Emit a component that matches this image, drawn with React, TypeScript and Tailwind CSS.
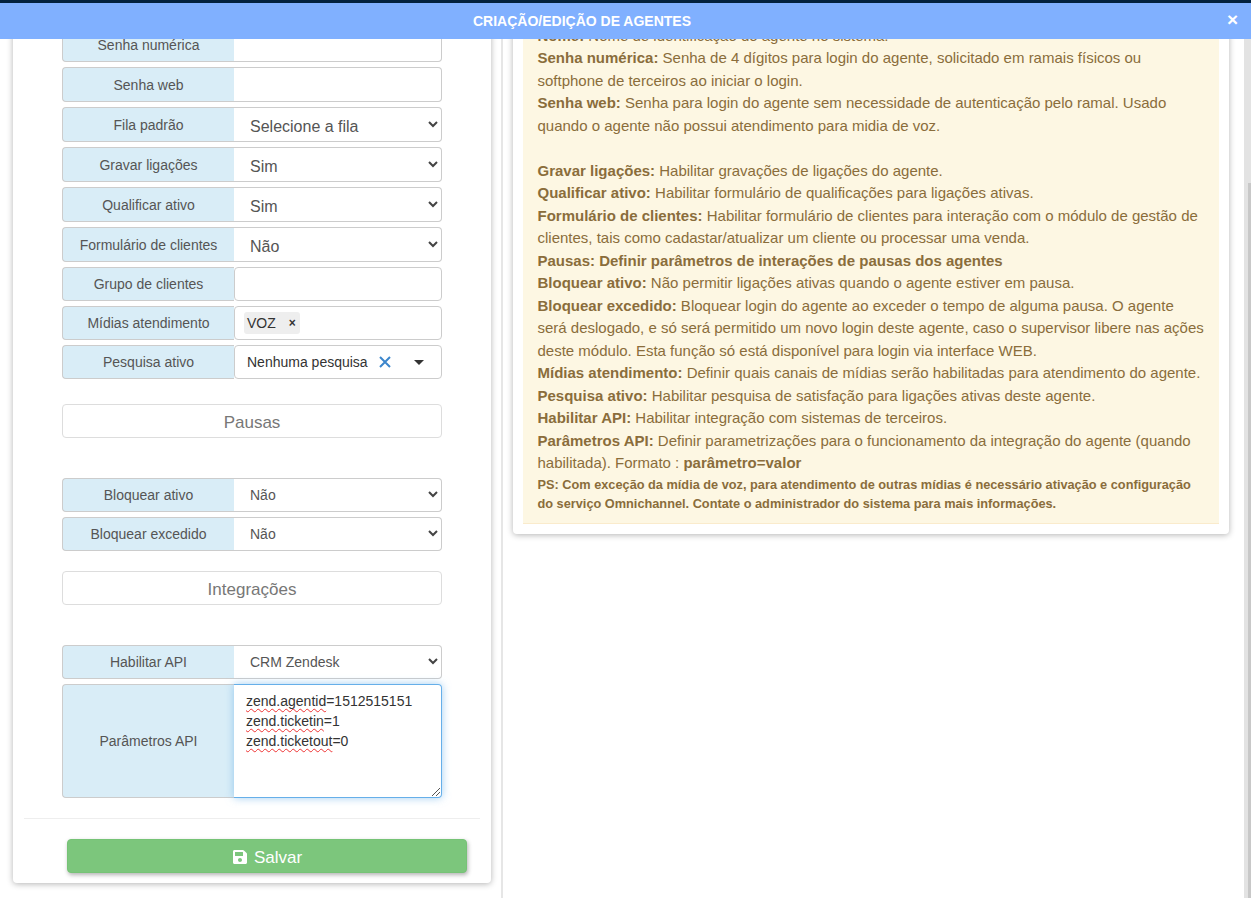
import { FaSave } from "react-icons/fa";

const Row = ({ label, children, className = "h-[35px]", flat = false }: { label: string; children: React.ReactNode; className?: string; flat?: boolean }) => (
  <div className={`flex w-[380px] ${className}`}>
    <div className="flex w-[172px] shrink-0 items-center justify-center rounded-l border border-r-0 border-[#ccc] bg-[#d9edf7] text-sm text-[#555]">
      {label}
    </div>
    <div className={`min-w-0 flex-1 bg-white ${flat ? "" : "rounded border border-[#ccc]"}`}>{children}</div>
  </div>
);

const Chevron = () => (
  <svg width="12" height="8" viewBox="0 0 12 8" className="shrink-0">
    <path d="M2 2l4 4 4-4" fill="none" stroke="#444" strokeWidth="2" />
  </svg>
);

const Blank = () => <div className="h-full rounded-r border border-l-0 border-[#ccc] bg-white" />;

const Select = ({ value, small = false }: { value: string; small?: boolean }) => (
  <div className={`flex h-full items-center justify-between rounded-r border border-l-0 border-[#ccc] bg-white pl-4 pr-[2px] text-[#555] ${small ? "text-sm" : "text-base"}`}>
    <span className={small ? "" : "pt-[4px]"}>{value}</span>
    <span className="pb-[2px]">
      <Chevron />
    </span>
  </div>
);

const Title = ({ text }: { text: string }) => (
  <div className="flex h-[34px] w-[380px] items-center justify-center rounded border border-[#ddd] bg-white pt-[4px] text-[17px] text-[#777]">
    {text}
  </div>
);

const Wavy = ({ children }: { children: React.ReactNode }) => (
  <span className="[text-decoration-color:#e33] [text-decoration-line:underline] [text-decoration-skip-ink:none] [text-decoration-style:wavy] [text-decoration-thickness:1px] [text-underline-offset:2px]">
    {children}
  </span>
);

const help: [string, string][] = [
  ["Senha numérica:", " Senha de 4 dígitos para login do agente, solicitado em ramais físicos ou softphone de terceiros ao iniciar o login."],
  ["Senha web:", " Senha para login do agente sem necessidade de autenticação pelo ramal. Usado quando o agente não possui atendimento para midia de voz."],
];

const help2: [string, string][] = [
  ["Gravar ligações:", " Habilitar gravações de ligações do agente."],
  ["Qualificar ativo:", " Habilitar formulário de qualificações para ligações ativas."],
  ["Formulário de clientes:", " Habilitar formulário de clientes para interação com o módulo de gestão de clientes, tais como cadastar/atualizar um cliente ou processar uma venda."],
  ["Pausas: Definir parâmetros de interações de pausas dos agentes", ""],
  ["Bloquear ativo:", " Não permitir ligações ativas quando o agente estiver em pausa."],
  ["Bloquear excedido:", " Bloquear login do agente ao exceder o tempo de alguma pausa. O agente será deslogado, e só será permitido um novo login deste agente, caso o supervisor libere nas ações deste módulo. Esta função só está disponível para login via interface WEB."],
  ["Mídias atendimento:", " Definir quais canais de mídias serão habilitadas para atendimento do agente."],
  ["Pesquisa ativo:", " Habilitar pesquisa de satisfação para ligações ativas deste agente."],
  ["Habilitar API:", " Habilitar integração com sistemas de terceiros."],
];

export default function App() {
  return (
    <div className="flex h-[898px] flex-col overflow-hidden bg-white font-['Liberation_Sans',sans-serif]">
      <div className="h-[3px] bg-[#02213e]" />
      <header className="relative z-10 flex h-9 items-center justify-center bg-[#80b0ff] pr-[87px] text-sm font-bold text-white">
        CRIAÇÃO/EDIÇÃO DE AGENTES
        <span className="absolute right-[13px] top-[8px] text-[19px] leading-[18px]">×</span>
      </header>

      <div className="relative flex min-h-0 flex-1 overflow-hidden">
        {/* coluna do formulário, rolada para baixo como na tela */}
        <div className="-mt-[12px] ml-[13px] w-[478px] shrink-0 self-start">
          <div className="flex h-[856px] flex-col items-center rounded-b bg-white shadow-[0_1px_6px_rgba(0,0,0,0.3)]">
            <div className="flex flex-col gap-[5px]">
              <Row label="Senha numérica" flat><Blank /></Row>
              <Row label="Senha web" flat><Blank /></Row>
              <Row label="Fila padrão" flat><Select value="Selecione a fila" /></Row>
              <Row label="Gravar ligações" flat><Select value="Sim" /></Row>
              <Row label="Qualificar ativo" flat><Select value="Sim" /></Row>
              <Row label="Formulário de clientes" flat><Select value="Não" /></Row>
              <Row label="Grupo de clientes" className="h-[34px]"><div /></Row>
              <Row label="Mídias atendimento" className="h-[34px]">
                <div className="flex h-full items-center pl-[9px]">
                  <div className="flex h-[22px] items-center rounded-[3px] bg-[#eee] pl-[3px] text-sm text-[#333]">
                    VOZ
                    <span className="ml-[11px] mr-[2px] w-[11px] text-center text-xs font-bold">×</span>
                  </div>
                </div>
              </Row>
              <Row label="Pesquisa ativo" className="h-[34px]">
                <div className="flex h-full items-center pl-3 text-sm text-[#333]">
                  Nenhuma pesquisa
                  <svg width="12" height="12" viewBox="0 0 12 12" className="ml-[11px]">
                    <path d="M1 1l10 10M11 1L1 11" stroke="#3c86cc" strokeWidth="2" />
                  </svg>
                  <span className="ml-[23px] h-0 w-0 border-x-[5px] border-t-[5px] border-x-transparent border-t-[#333]" />
                </div>
              </Row>
            </div>

            <div className="mt-[25px]"><Title text="Pausas" /></div>

            <div className="mt-10 flex flex-col gap-[5px]">
              <Row label="Bloquear ativo" className="h-[34px]" flat><Select value="Não" small /></Row>
              <Row label="Bloquear excedido" className="h-[34px]" flat><Select value="Não" small /></Row>
            </div>

            <div className="mt-5"><Title text="Integrações" /></div>

            <div className="mt-10 flex flex-col gap-[5px]">
              <Row label="Habilitar API" className="h-[34px]" flat><Select value="CRM Zendesk" small /></Row>
              <Row label="Parâmetros API" className="h-[114px]" flat>
                <div className="relative h-full rounded-r border border-l-0 border-[#66afe9] pl-3 pt-1 text-sm leading-5 text-[#333] shadow-[0_0_8px_rgba(102,175,233,0.6)]">
                  <div className="mt-[2px]"><Wavy>zend.agentid</Wavy>=1512515151</div>
                  <div><Wavy>zend.ticketin</Wavy>=1</div>
                  <div><Wavy>zend.ticketout</Wavy>=0</div>
                  <svg width="8" height="8" viewBox="0 0 8 8" className="absolute bottom-[1px] right-[1px]">
                    <path d="M0 8L8 0M4 8l4-4" stroke="#555" strokeWidth="1" fill="none" />
                  </svg>
                </div>
              </Row>
            </div>

            <div className="mt-5 h-px w-[456px] bg-[#eee]" />

            <button className="ml-[30px] mt-5 flex h-[34px] w-[400px] items-center justify-center gap-[6px] rounded border border-[#76c376] bg-[#7cc67c] pt-[4px] text-[17px] text-white shadow-[1px_2px_4px_rgba(0,0,0,0.3)]">
              <FaSave size={16} className="-mt-[3px]" />
              Salvar
            </button>
          </div>
        </div>

        <div className="ml-[10px] w-[2px] shrink-0 bg-[#e6e6e6]" />

        <div className="-mt-[21px] ml-[10px] w-[716px] shrink-0 self-start">
          <div className="rounded-b bg-white px-[10px] pb-[10px] shadow-[0_1px_6px_rgba(0,0,0,0.3)]">
            <div className="border-b border-[#faebcc] bg-[#fdf7e3] pb-[9px] pl-[14.5px] pr-[13px] pt-[6.5px] text-[15px] leading-[22.5px] text-[#8a6d3b]">
              <div><b>Nome:</b> Nome de identificação do agente no sistema.</div>
              {help.map(([title, text]) => (
                <div key={title}><b>{title}</b>{text}</div>
              ))}
              <br />
              {help2.map(([title, text]) => (
                <div key={title}><b>{title}</b>{text}</div>
              ))}
              <div>
                <b>Parâmetros API:</b> Definir parametrizações para o funcionamento da integração do agente (quando habilitada). Formato : <b>parâmetro=valor</b>
              </div>
              <div className="text-[12.75px] font-bold leading-[19.5px]">
                PS: Com exceção da mídia de voz, para atendimento de outras mídias é necessário ativação e configuração do serviço Omnichannel. Contate o administrador do sistema para mais informações.
              </div>
            </div>
          </div>
        </div>

        {/* barra de rolagem */}
        <div className="absolute bottom-0 right-0 top-0 w-[7px] bg-[#e3e3e3]">
          <div className="ml-auto mt-[144px] h-[715px] w-[3px] bg-[#c8c8c8]" />
        </div>
      </div>
    </div>
  );
}
